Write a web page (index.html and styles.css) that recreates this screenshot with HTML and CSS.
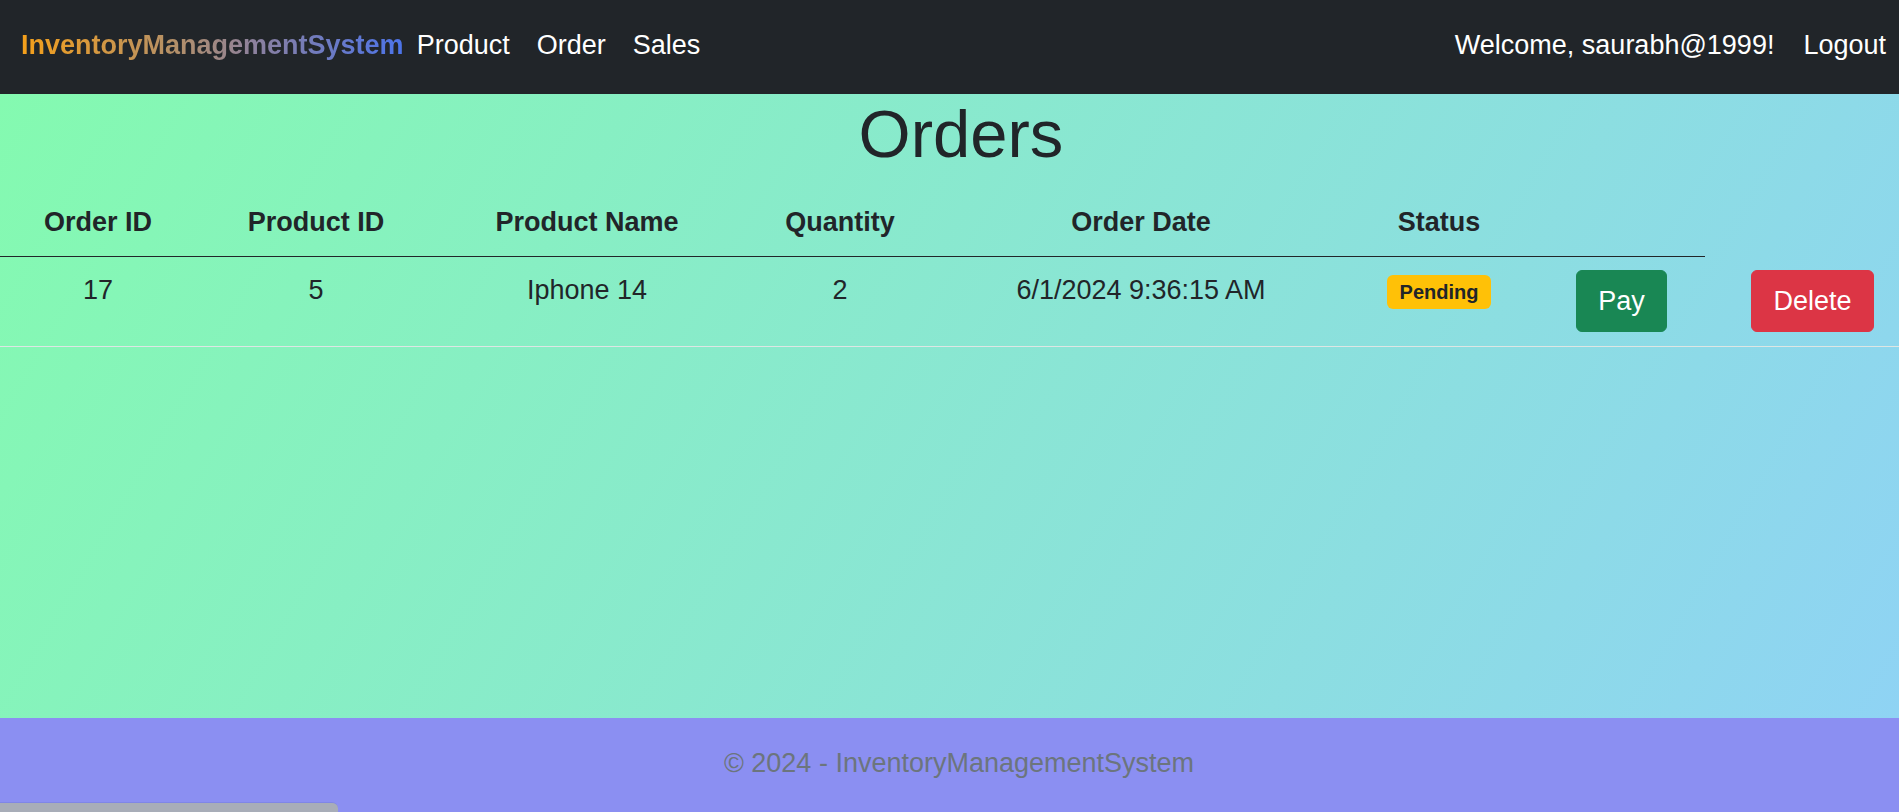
FILE: index.html
```html
<!DOCTYPE html>
<html lang="en">
<head>
<meta charset="utf-8">
<title>Orders - InventoryManagementSystem</title>
<link rel="stylesheet" href="styles.css">
</head>
<body>
<header class="navbar">
  <a class="brand" href="#">InventoryManagementSystem</a>
  <nav class="nav-links">
    <a href="#">Product</a>
    <a href="#">Order</a>
    <a href="#">Sales</a>
  </nav>
  <div class="nav-right">
    <span class="welcome">Welcome, saurabh@1999!</span>
    <a href="#">Logout</a>
  </div>
</header>
<main class="main">
  <h1 class="title">Orders</h1>
  <table class="orders">
    <colgroup>
      <col class="c1"><col class="c2"><col class="c3"><col class="c4">
      <col class="c5"><col class="c6"><col class="c7"><col class="c8">
    </colgroup>
    <thead>
      <tr>
        <th>Order ID</th>
        <th>Product ID</th>
        <th>Product Name</th>
        <th>Quantity</th>
        <th>Order Date</th>
        <th>Status</th>
        <th></th>
      </tr>
    </thead>
    <tbody>
      <tr>
        <td>17</td>
        <td>5</td>
        <td>Iphone 14</td>
        <td>2</td>
        <td>6/1/2024 9:36:15 AM</td>
        <td><span class="badge">Pending</span></td>
        <td><button class="btn btn-pay">Pay</button></td>
        <td class="del-cell"><button class="btn btn-del">Delete</button></td>
      </tr>
    </tbody>
  </table>
</main>
<footer class="footer">© 2024 - InventoryManagementSystem</footer>
<div class="hscroll"></div>
</body>
</html>
```

FILE: styles.css
```css
html, body {
  margin: 0;
  padding: 0;
  overflow: hidden;
}
body {
  font-family: "Liberation Sans", Arial, sans-serif;
  color: #212529;
  min-height: 100vh;
  display: flex;
  flex-direction: column;
}
a { text-decoration: none; }

.navbar {
  height: 94px;
  box-sizing: border-box;
  background: #212529;
  display: flex;
  align-items: center;
  padding: 0 13px 4px 21px;
  font-size: 27px;
  line-height: 40px;
  flex-shrink: 0;
}
.brand {
  font-weight: bold;
  background: linear-gradient(90deg, #f5a01a 0%, #b49068 40%, #8a80a0 62%, #4c74ea 100%);
  -webkit-background-clip: text;
  background-clip: text;
  color: transparent;
  margin-right: 13px;
}
.nav-links {
  display: flex;
  gap: 27px;
}
.nav-links a, .nav-right a, .welcome { color: #ffffff; }
.nav-right {
  margin-left: auto;
  display: flex;
  gap: 29px;
}

.main {
  flex: 1;
  background: linear-gradient(120deg, #84fab0 0%, #8fd3f4 100%);
  overflow: hidden;
}
.title {
  margin: 6px 0 21px;
  padding-left: 23px;
  text-align: center;
  font-size: 67px;
  line-height: 67px;
  font-weight: normal;
}
.orders {
  width: 1920px;
  table-layout: fixed;
  border-collapse: collapse;
  font-size: 27px;
  line-height: 40px;
}
.c1 { width: 196px; }
.c2 { width: 240px; }
.c3 { width: 302px; }
.c4 { width: 204px; }
.c5 { width: 398px; }
.c6 { width: 198px; }
.c7 { width: 167px; }
.c8 { width: 215px; }
.orders th {
  font-weight: bold;
  text-align: center;
  padding: 14px 0;
  border-bottom: 1px solid #212529;
}
.orders td {
  text-align: center;
  vertical-align: top;
  padding: 13px 0 14px;
  border-bottom: 1px solid #dde6e4;
}
.badge {
  display: inline-block;
  vertical-align: top;
  margin-top: 5px;
  background: #ffc107;
  color: #212529;
  font-weight: bold;
  font-size: 20px;
  line-height: 20px;
  padding: 7px 13px;
  border-radius: 6px;
}
.btn {
  font-family: inherit;
  font-size: 27px;
  line-height: 40px;
  padding: 10px 21px;
  border: 1px solid transparent;
  border-radius: 6px;
  color: #ffffff;
  vertical-align: top;
}
.btn-pay { background: #198754; border-color: #198754; }
.btn-del { background: #dc3545; border-color: #dc3545; }

.footer {
  height: 94px;
  box-sizing: border-box;
  flex-shrink: 0;
  background: #8b8ff2;
  color: #6c757d;
  text-align: center;
  font-size: 27px;
  line-height: 40px;
  padding: 25px 0 0 19px;
}
.hscroll {
  position: fixed;
  left: 0;
  bottom: 0;
  width: 338px;
  height: 9px;
  background: #a8adb8;
  border-top: 1px solid #7f86e6;
  border-top-right-radius: 6px;
}
```
